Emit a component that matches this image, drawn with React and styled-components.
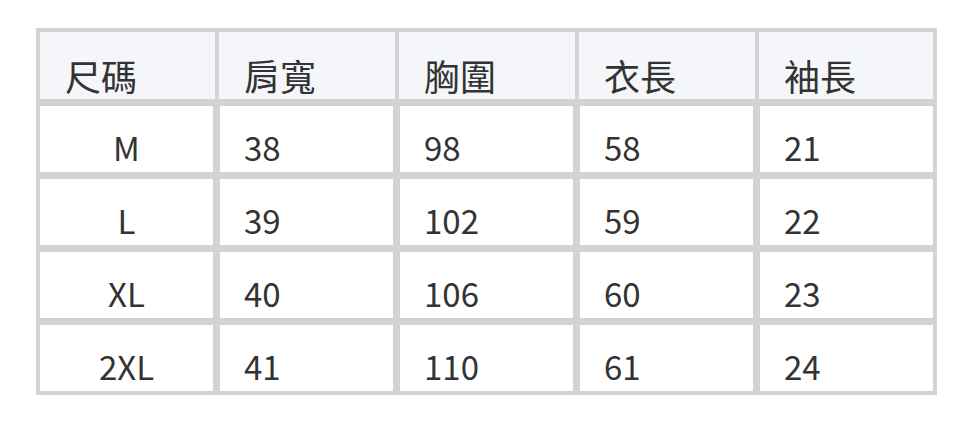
import React from 'react';
import styled, { createGlobalStyle } from 'styled-components';

const GlobalStyle = createGlobalStyle`
  html, body {
    margin: 0;
    padding: 0;
    background: #ffffff;
  }
  body {
    font-family: "Noto Sans CJK TC", "Noto Sans", sans-serif;
    font-weight: 400;
    color: #333333;
  }
`;

const Page = styled.div`
  padding: 28px 0 0 36px;
`;

const Table = styled.div`
  display: grid;
  grid-template-columns: 175px 176px 176px 176px 174px;
  grid-template-rows: 67px repeat(4, 69px);
  gap: 4px;
  padding: 4px;
  width: 893px;
  background: #d3d3d3;
`;

const HeadCell = styled.div`
  display: flex;
  align-items: flex-end;
  justify-content: flex-start;
  padding: 0 25px 2px 25px;
  background: #f5f6fa;
  font-size: 36px;
  line-height: 1.2;
`;

const Cell = styled.div`
  display: flex;
  align-items: flex-end;
  justify-content: ${(p) => (p.$center ? 'center' : 'flex-start')};
  padding: 0 ${(p) => (p.$center ? '0' : '24px')} 1px;
  background: #ffffff;
  border-top: 3px solid #d3d3d3;
  border-left: ${(p) => (p.$first ? '0' : '1px solid #d3d3d3')};
  border-right: ${(p) => (p.$last ? '0' : '2px solid #d3d3d3')};
  font-size: 33px;
  line-height: 48px;
`;

const headers = ['尺碼', '肩寬', '胸圍', '衣長', '袖長'];

const rows = [
  ['M', '38', '98', '58', '21'],
  ['L', '39', '102', '59', '22'],
  ['XL', '40', '106', '60', '23'],
  ['2XL', '41', '110', '61', '24'],
];

export default function App() {
  return (
    <>
      <GlobalStyle />
      <Page>
        <Table>
          {headers.map((h) => (
            <HeadCell key={h}>{h}</HeadCell>
          ))}
          {rows.map((row) =>
            row.map((v, i) => (
              <Cell
                key={row[0] + i}
                $center={i === 0}
                $first={i === 0}
                $last={i === row.length - 1}
              >
                {v}
              </Cell>
            ))
          )}
        </Table>
      </Page>
    </>
  );
}
